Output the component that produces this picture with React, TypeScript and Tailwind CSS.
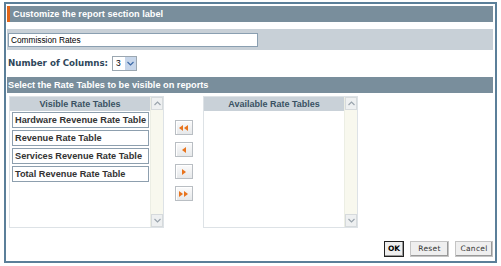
import React from "react";

const Tri = ({ dir }: { dir: "l" | "r" }) => (
  <svg width="4" height="6" viewBox="0 0 4 6">
    {dir === "l" ? <polygon points="4,0 4,6 0,3" fill="#e8741e" /> : <polygon points="0,0 0,6 4,3" fill="#e8741e" />}
  </svg>
);

const ArrowBtn = ({ children }: { children: React.ReactNode }) => (
  <div className="w-[18px] h-[15px] border border-[#b9bec3] bg-gradient-to-b from-[#fbfbfb] to-[#e6e8ea] flex items-center justify-center gap-[1px] shadow-[inset_1px_1px_0_#fff]">
    {children}
  </div>
);

const Chevron = ({ up, color = "#9aa4ad" }: { up?: boolean; color?: string }) => (
  <svg width="7" height="5" viewBox="0 0 7 5">
    <polyline points={up ? "0.5,4 3.5,1 6.5,4" : "0.5,1 3.5,4 6.5,1"} fill="none" stroke={color} strokeWidth="1.2" />
  </svg>
);

const Scrollbar = () => (
  <div className="w-[13px] flex flex-col bg-[#f8f8ee] border-l border-[#eceee4]">
    <div className="h-[13px] bg-[#eef0f1] border border-[#d6dadc] flex items-center justify-center">
      <Chevron up />
    </div>
    <div className="flex-1" />
    <div className="h-[13px] bg-[#eef0f1] border border-[#d6dadc] flex items-center justify-center">
      <Chevron />
    </div>
  </div>
);

const Panel = ({ title, items }: { title: string; items: string[] }) => (
  <div className="w-[155px] h-[132px] border border-[#dde2e6] bg-white flex">
    <div className="flex-1 flex flex-col">
      <div className="h-[14px] bg-[#c9d1d8] text-center text-[9px] font-bold text-[#3a5263] leading-[14px]">{title}</div>
      <div className="flex flex-col gap-[2px] pl-[2px] pt-[1px]">
        {items.map((t) => (
          <div key={t} className="w-[137px] h-[16px] border border-[#8d9fae] text-[9.2px] font-bold text-[#333] leading-[14px] pl-[2px] whitespace-nowrap">
            {t}
          </div>
        ))}
      </div>
    </div>
    <Scrollbar />
  </div>
);

export default function App() {
  return (
    <div className="w-[501px] h-[266px] bg-white pl-[4px] pt-[2px]" style={{ fontFamily: '"Liberation Sans", Arial, sans-serif' }}>
      <div className="w-[493px] h-[261px] border-2 border-[#5b7f99] flex flex-col pt-[2px] pl-[1px] pr-[2px]">
        <div className="h-[16px] bg-[#798e9c] border-l-[3px] border-[#e0661a] text-white font-bold text-[9.2px] leading-[16px] pl-[3px]">
          Customize the report section label
        </div>
        <div className="mt-[7px] h-[21px] bg-[#c8d0d7] flex items-center pl-[1px]">
          <div className="w-[250px] h-[14px] bg-white border border-[#8a9fb1] text-[8.3px] text-black leading-[12px] pl-[2px]">
            Commission Rates
          </div>
        </div>
        <div className="h-[27px] flex items-center pl-[1px]">
          <span className="text-[8.7px] font-bold text-[#2f475a]" style={{ fontFamily: '"DejaVu Sans", Verdana, sans-serif' }}>
            Number of Columns:
          </span>
          <div className="ml-[4px] w-[25px] h-[15px] border border-[#9ba7b1] bg-white flex items-center">
            <span className="flex-1 text-[8.5px] pl-[3px] text-black leading-[13px]">3</span>
            <div className="w-[11px] h-[13px] bg-[#c7d6ea] flex items-center justify-center">
              <Chevron color="#3d6aa8" />
            </div>
          </div>
        </div>
        <div className="h-[16px] bg-[#798e9c] text-white font-bold text-[9.2px] leading-[16px] pl-[1px]">
          Select the Rate Tables to be visible on reports
        </div>
        <div className="mt-[3px] flex pl-[2px]">
          <Panel
            title="Visible Rate Tables"
            items={["Hardware Revenue Rate Table", "Revenue Rate Table", "Services Revenue Rate Table", "Total Revenue Rate Table"]}
          />
          <div className="w-[39px] flex flex-col items-center pt-[24px] gap-[7px]">
            <ArrowBtn>
              <Tri dir="l" />
              <Tri dir="l" />
            </ArrowBtn>
            <ArrowBtn>
              <Tri dir="l" />
            </ArrowBtn>
            <ArrowBtn>
              <Tri dir="r" />
            </ArrowBtn>
            <ArrowBtn>
              <Tri dir="r" />
              <Tri dir="r" />
            </ArrowBtn>
          </div>
          <Panel title="Available Rate Tables" items={[]} />
        </div>
        <div className="mt-[13px] flex justify-end gap-[6px]" style={{ fontFamily: '"DejaVu Sans", Verdana, sans-serif' }}>
          <div className="w-[20px] h-[16px] border border-[#222] bg-[#eeeeee] text-[7.5px] font-bold text-black flex items-center justify-center shadow-[inset_-1px_-1px_0_#999]">
            OK
          </div>
          <div className="w-[39px] h-[16px] border border-[#c4c4c4] bg-[#efefef] text-[7.5px] text-[#333] flex items-center justify-center tracking-[0.3px] shadow-[inset_-1px_-1px_0_#999]">
            Reset
          </div>
          <div className="w-[38px] h-[16px] border border-[#c4c4c4] bg-[#efefef] text-[7.5px] text-[#333] flex items-center justify-center tracking-[0.3px] shadow-[inset_-1px_-1px_0_#999]">
            Cancel
          </div>
        </div>
      </div>
    </div>
  );
}
